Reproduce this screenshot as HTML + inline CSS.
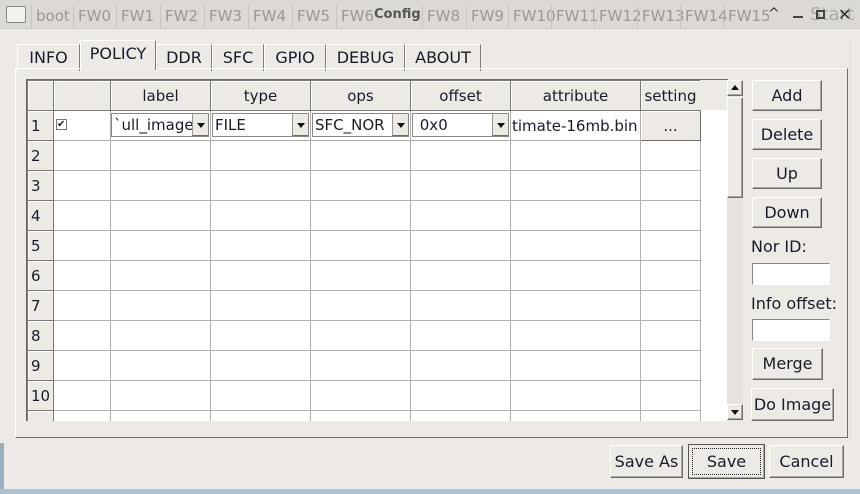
<!DOCTYPE html>
<html><head><meta charset="utf-8"><style>
*{box-sizing:border-box;margin:0;padding:0}
body{width:860px;height:494px;overflow:hidden;background:#edeae5;font-family:"DejaVu Sans","Liberation Sans",sans-serif;font-size:15px;color:#1a1a2a;position:relative}
.a{position:absolute}
.tb{left:0;top:0;width:860px;height:29px;background:#dcd8d3;border-bottom:1px solid #cfcbc6}
.tt{position:absolute;top:5px;height:24px;color:#9a9896;font-size:15px;border-left:1px solid #c8c4bf;padding-left:4px;line-height:22px}
.btn{position:absolute;background:#edeae5;border:1px solid;border-color:#fff #6e6c69 #6e6c69 #fff;box-shadow:inset -1px -1px 0 #a9a6a2;text-align:center;font-size:16px}
.tab{position:absolute;top:42px;height:27px;border:1px solid #fff;border-right-color:#807d7a;border-bottom:none;text-align:center;line-height:26px;font-size:16px}
table{border-collapse:collapse;table-layout:fixed}
td{border:1px solid #b4b0ab;height:30px;background:#fff;font-size:15px;padding:0 2px;white-space:nowrap;overflow:hidden}
td.h{background:#edeae5;border:1px solid #7a7774;box-shadow:inset 1px 1px 0 #fff;text-align:center}
td.r{background:#edeae5;border:1px solid #7a7774;box-shadow:inset 1px 1px 0 #fff;text-align:left;padding-left:3px}
.cb{position:absolute;top:2px;height:24px;border:1px solid #8a8784;background:#fff;line-height:22px;padding-left:2px;overflow:hidden}
.dd{position:absolute;right:0;top:0;width:16px;height:22px;background:#edeae5;border-left:1px solid #9a9794;border-bottom:1px solid #6e6c69}
.dd:after{content:"";position:absolute;left:4px;top:9px;border:4px solid transparent;border-top:5px solid #111}
.inp{position:absolute;left:752px;width:78px;height:22px;background:#fff;border:1px solid;border-color:#8a8784 #fff #fff #8a8784}
</style></head><body>
<div class="a tb">
 <div class="a" style="left:6px;top:6px;width:20px;height:17px;border:1px solid #8a8784;background:#f4f2ef;border-radius:2px"></div>
 <div class="tt" style="left:31px">boot</div>
 <div class="tt" style="left:73px">FW0</div>
 <div class="tt" style="left:116px">FW1</div>
 <div class="tt" style="left:160px">FW2</div>
 <div class="tt" style="left:204px">FW3</div>
 <div class="tt" style="left:248px">FW4</div>
 <div class="tt" style="left:292px">FW5</div>
 <div class="tt" style="left:336px">FW6</div>
 <div class="a" style="left:374px;top:7px;font-weight:bold;font-size:13px;color:#555">Config</div>
 <div class="tt" style="left:422px">FW8</div>
 <div class="tt" style="left:466px">FW9</div>
 <div class="tt" style="left:508px">FW10</div>
 <div class="tt" style="left:551px">FW11</div>
 <div class="tt" style="left:594px">FW12</div>
 <div class="tt" style="left:637px">FW13</div>
 <div class="tt" style="left:680px">FW14</div>
 <div class="tt" style="left:723px">FW15</div>
 <div class="a" style="left:768px;top:6px;font-size:14px;color:#333">^</div>
 <div class="a" style="left:793px;top:16px;width:10px;height:2px;background:#444"></div>
 <div class="a" style="left:810px;top:4px;color:#aaa;font-size:18px">Start</div>
 <div class="a" style="left:816px;top:10px;width:9px;height:9px;border:2px solid #444"></div>
 <div class="a" style="left:838px;top:5px;font-size:16px;color:#333">✕</div>
</div>
<div class="a" style="left:0;top:443px;width:4px;height:51px;background:#9ab0c0"></div>
<div class="a" style="left:0;top:489px;width:860px;height:5px;background:#aac2d2"></div>
<div class="tab" style="left:17px;top:44px;width:63px">INFO</div>
<div class="tab" style="left:80px;top:40px;width:76px;height:30px;background:#edeae5;z-index:2">POLICY</div>
<div class="tab" style="left:156px;top:44px;width:56px">DDR</div>
<div class="tab" style="left:212px;top:44px;width:52px">SFC</div>
<div class="tab" style="left:264px;top:44px;width:62px">GPIO</div>
<div class="tab" style="left:326px;top:44px;width:79px">DEBUG</div>
<div class="tab" style="left:405px;top:44px;width:76px">ABOUT</div>
<div class="a" style="left:15px;top:68px;width:833px;height:370px;border:1px solid;border-color:#fff #6e6c69 #6e6c69 #fff"></div>
<div class="a" style="left:26px;top:79px;width:702px;height:342px;overflow:hidden;border-left:1px solid #6e6c69;border-top:1px solid #6e6c69;background:#fff">
<table style="width:673px">
<colgroup><col style="width:26px"><col style="width:57px"><col style="width:100px"><col style="width:100px"><col style="width:100px"><col style="width:100px"><col style="width:130px"><col style="width:60px"></colgroup>
<tr><td class="h"></td><td class="h"></td><td class="h">label</td><td class="h">type</td><td class="h">ops</td><td class="h">offset</td><td class="h">attribute</td><td class="h">setting</td></tr>
<tr><td class="r">1</td><td style="position:relative"><div class="a" style="left:2px;top:8px;width:11px;height:11px;border:1px solid #777;font-size:10px;line-height:9px">✔</div></td>
<td style="position:relative;padding:0"><div class="cb" style="left:0;width:98px">`ull_image<div class="dd"></div></div></td>
<td style="position:relative;padding:0"><div class="cb" style="left:1px;width:97px">FILE<div class="dd"></div></div></td>
<td style="position:relative;padding:0"><div class="cb" style="left:1px;width:97px">SFC_NOR<div class="dd"></div></div></td>
<td style="position:relative;padding:0"><div class="cb" style="left:1px;width:97px">&nbsp;0x0<div class="dd"></div></div></td>
<td style="padding:0 1px">timate-16mb.bin</td>
<td class="h" style="border-color:#6e6c69">...</td></tr>
<tr><td class="r">2</td><td></td><td></td><td></td><td></td><td></td><td></td><td></td></tr>
<tr><td class="r">3</td><td></td><td></td><td></td><td></td><td></td><td></td><td></td></tr>
<tr><td class="r">4</td><td></td><td></td><td></td><td></td><td></td><td></td><td></td></tr>
<tr><td class="r">5</td><td></td><td></td><td></td><td></td><td></td><td></td><td></td></tr>
<tr><td class="r">6</td><td></td><td></td><td></td><td></td><td></td><td></td><td></td></tr>
<tr><td class="r">7</td><td></td><td></td><td></td><td></td><td></td><td></td><td></td></tr>
<tr><td class="r">8</td><td></td><td></td><td></td><td></td><td></td><td></td><td></td></tr>
<tr><td class="r">9</td><td></td><td></td><td></td><td></td><td></td><td></td><td></td></tr>
<tr><td class="r">10</td><td></td><td></td><td></td><td></td><td></td><td></td><td></td></tr>
<tr><td class="r"></td><td></td><td></td><td></td><td></td><td></td><td></td><td></td></tr>
</table>
<div class="a" style="left:673px;top:0;width:29px;height:30px;background:#edeae5"></div>
</div>
<div class="a" style="left:727px;top:80px;width:16px;height:341px;background:#e6e3df"></div>
<div class="btn" style="left:727px;top:80px;width:16px;height:16px"><div class="a" style="left:3px;top:4px;border:4px solid transparent;border-bottom:5px solid #111;border-top:none"></div></div>
<div class="btn" style="left:727px;top:97px;width:16px;height:101px"></div>
<div class="btn" style="left:727px;top:404px;width:16px;height:16px"><div class="a" style="left:3px;top:5px;border:4px solid transparent;border-top:5px solid #111;border-bottom:none"></div></div>
<div class="btn" style="left:752px;top:80px;width:70px;height:31px;line-height:29px">Add</div>
<div class="btn" style="left:752px;top:119px;width:70px;height:31px;line-height:29px">Delete</div>
<div class="btn" style="left:752px;top:158px;width:70px;height:31px;line-height:29px">Up</div>
<div class="btn" style="left:752px;top:197px;width:70px;height:31px;line-height:29px">Down</div>
<div class="a" style="left:751px;top:237px;font-size:16px">Nor ID:</div>
<div class="inp" style="top:263px"></div>
<div class="a" style="left:751px;top:294px;font-size:16px">Info offset:</div>
<div class="inp" style="top:319px"></div>
<div class="btn" style="left:752px;top:348px;width:71px;height:32px;line-height:30px">Merge</div>
<div class="btn" style="left:751px;top:388px;width:83px;height:33px;line-height:31px">Do Image</div>
<div class="btn" style="left:610px;top:445px;width:73px;height:33px;line-height:31px">Save As</div>
<div class="btn" style="left:688px;top:444px;width:77px;height:35px;line-height:33px;border-color:#555"><div class="a" style="left:3px;top:3px;right:3px;bottom:3px;border:1px dotted #222"></div>Save</div>
<div class="btn" style="left:769px;top:445px;width:75px;height:33px;line-height:31px">Cancel</div>
<div class="a" style="left:850px;top:40px;width:10px;height:400px;border-left:1px solid #ddd"></div>
</body></html>
